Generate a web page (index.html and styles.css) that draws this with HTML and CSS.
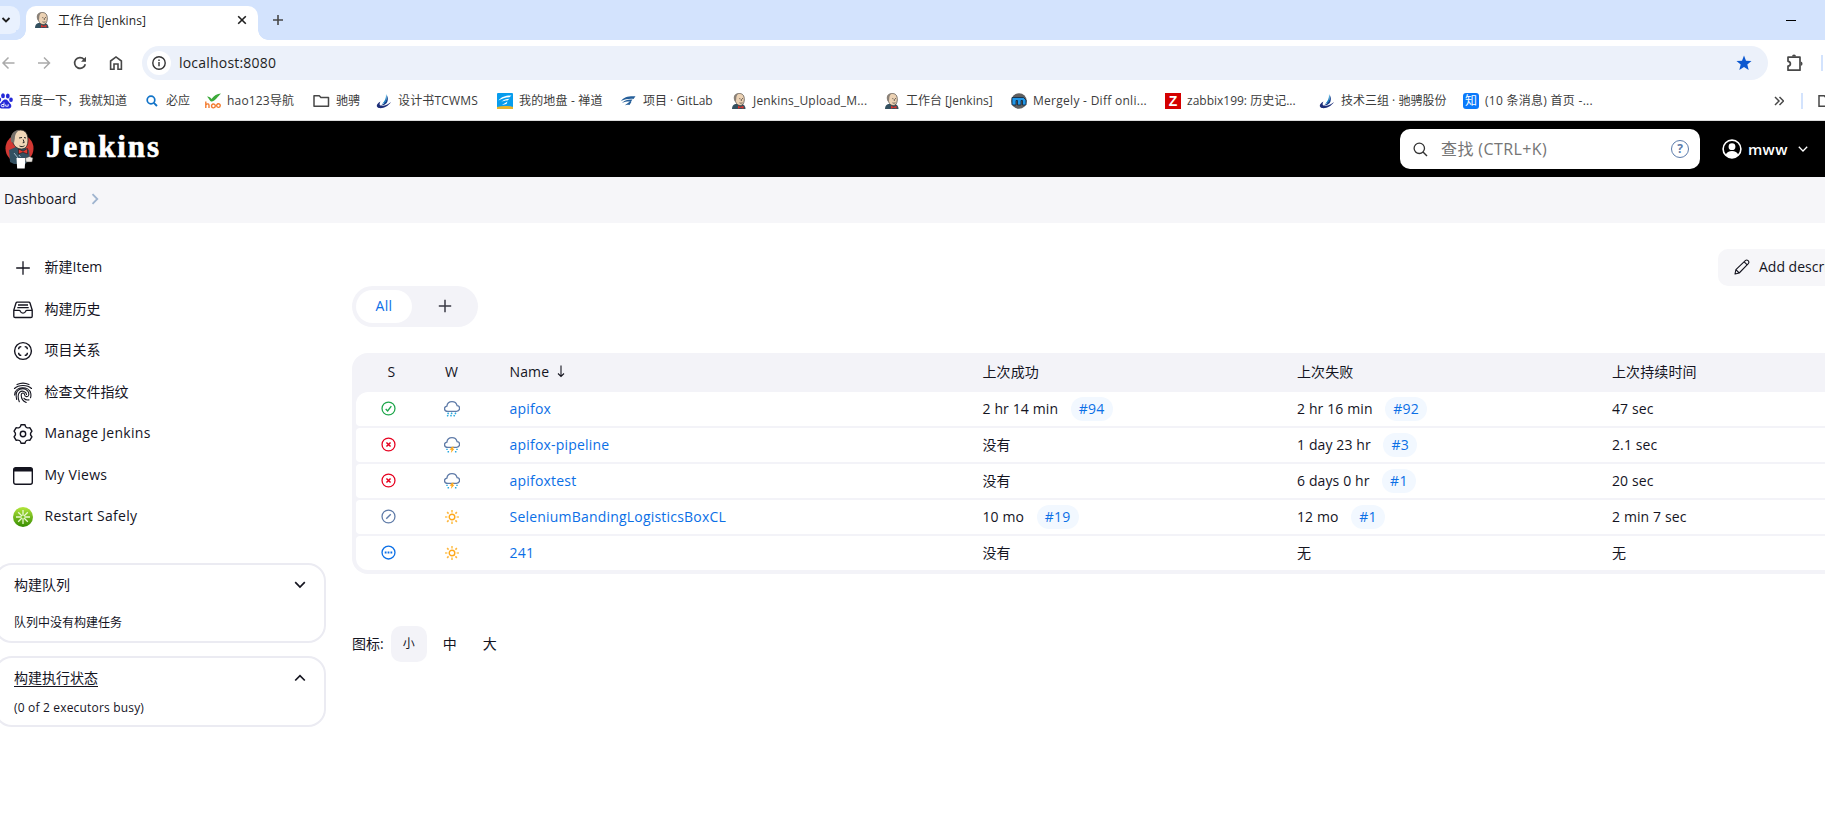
FILE: index.html
```html
<!DOCTYPE html>
<html lang="zh-CN">
<head>
<meta charset="utf-8">
<title>工作台 [Jenkins]</title>
<link rel="stylesheet" href="styles.css">
</head>
<body>
<svg class="defs" width="0" height="0" aria-hidden="true">
  <symbol id="butler" viewBox="0 0 16 16">
    <path d="M1 16c0-3 1.500-4.500 3.500-5h6c2.500.4 4 2 4 5z" fill="#33505f"/>
    <path d="M4 6C3 2 5.500.5 8.500.5S13.500 2.500 13.300 7c-.2 3.500-1.800 5.500-4 5.500C6 12.500 4.500 9.500 4 6z" fill="#ecd2b4" stroke="#4b443e" stroke-width=".7"/>
    <path d="M3.500 8C1.500 3 4 .6 7.500.5 5.500 2 5.300 4 5.200 6.500L4.600 9z" fill="#8a8178"/>
    <path d="M8.300 5.600h1M11 5.600h1M10.300 6v2M8.500 9.800c1 .5 2 .5 3-.1" stroke="#4b443e" stroke-width=".8" fill="none"/>
    <path d="M7 12.800l2.500 1.200 3-1.300v3l-3-1-2.500 1z" fill="#d8342c"/>
  </symbol>
  <symbol id="swoosh" viewBox="0 0 16 16">
    <path d="M10 1c1.500 3 .8 6-.8 8.500L6 11c3-3 4.300-5.500 4-10z" fill="#1385c7"/>
    <path d="M11.200 2.500c1.500 4 .6 8-3.200 9.500l-3 .3c4-1.800 6.200-5.300 6.200-9.800z" fill="#153f8d"/>
    <path d="M4.500 8.500C0 11-.3 14 3 15c4 .8 9-1.500 12-6-3 2.500-6.500 4-9.500 3.600-2.300-.2-2.300-2.100-1-4.100z" fill="#1d2e78"/>
  </symbol>
  <symbol id="sun" viewBox="0 0 16 16">
    <circle cx="8" cy="8" r="2.800" fill="none" stroke="#fea81b" stroke-width="1.400"/>
    <path d="M8 1v2.400M8 12.600V15M1 8h2.400M12.600 8H15" stroke="#fec65a" stroke-width="1.700"/>
    <path d="M3.100 3.100l1.500 1.500M11.400 11.400l1.500 1.500M3.100 12.900l1.500-1.500M11.400 4.600l1.500-1.500" stroke="#feb53c" stroke-width="1.500"/>
  </symbol>
  <symbol id="cloud" viewBox="0 0 16 16">
    <path d="M3.800 10.500C-.4 10.500-.4 6 2.900 5.400 3.300 2.300 5.500.9 8 .9c2.700 0 4.500 1.600 5.100 3.900 3.500.4 3.300 5.700-.6 5.700z" fill="none" stroke="#5f7ba8" stroke-width="1.300"/>
  </symbol>
  <symbol id="storm" viewBox="0 0 16 16">
    <use href="#cloud" y="-.2"/>
    <path d="M8 9.800l-2.400 2.900h2L6.800 16l3.700-4.200H8.700l1.400-2z" fill="#feab1e"/>
    <path d="M3 11.800v1.300M4.300 14v1.400M13 11.800v1.300M11.700 14v1.400" stroke="#2aa9df" stroke-width="1.500"/>
  </symbol>
  <symbol id="failed" viewBox="0 0 16 16">
    <circle cx="8" cy="8" r="6.900" fill="none" stroke="#e6001f" stroke-width="1.350"/>
    <path d="M5.800 5.800l4.400 4.400M10.200 5.800l-4.400 4.400" stroke="#e6001f" stroke-width="1.600"/>
  </symbol>
</svg>

<header class="browser">
  <div class="tabstrip">
    <div class="tabsearch"><svg width="10" height="10" viewBox="0 0 10 10"><path d="M1.500 3L5 6.500 8.500 3" fill="none" stroke="#1f1f1f" stroke-width="1.800"/></svg></div>
    <div class="tab">
      <svg width="16" height="16"><use href="#butler"/></svg>
      <span class="tab-title">工作台 [Jenkins]</span>
      <svg class="tab-close" width="10" height="10" viewBox="0 0 10 10"><path d="M1.200 1.200l7.600 7.600M8.800 1.200L1.200 8.800" stroke="#1f1f1f" stroke-width="1.600"/></svg>
    </div>
    <svg class="newtab" width="12" height="12" viewBox="0 0 12 12"><path d="M6 1v10M1 6h10" stroke="#474747" stroke-width="1.600"/></svg>
    <svg class="minimize" width="10" height="10" viewBox="0 0 10 10"><path d="M0 5.500h10" stroke="#000"/></svg>
  </div>
  <div class="toolbar">
    <svg width="14" height="14" viewBox="0 0 14 14"><path d="M13.500 7H2.500M7.500 1.500L2 7l5.500 5.500" fill="none" stroke="#aaa" stroke-width="1.500"/></svg>
    <svg width="14" height="14" viewBox="0 0 14 14"><path d="M1 7h11.500M7 1.500L12.500 7 7 12.500" fill="none" stroke="#aaa" stroke-width="1.500"/></svg>
    <svg width="14" height="14" viewBox="0 0 14 14"><path d="M12.300 8.200A5.400 5.400 0 1 1 11 3.300l1.300 1.500" fill="none" stroke="#474747" stroke-width="1.700"/><path d="M13 .8v5H8z" fill="#474747"/></svg>
    <svg width="14" height="16" viewBox="0 0 14 16"><path d="M1.600 14.200V6L7 1.900 12.400 6v8.200H9V9H5v5.200z" fill="none" stroke="#474747" stroke-width="1.600"/></svg>
    <div class="omnibox">
      <span class="site-info"><svg width="14" height="14" viewBox="0 0 14 14"><circle cx="7" cy="7" r="6.200" fill="none" stroke="#333" stroke-width="1.400"/><path d="M7 6v4.300M7 3.500v1.500" stroke="#333" stroke-width="1.400"/></svg></span>
      <span class="url">localhost:8080</span>
      <svg class="star" width="16" height="16" viewBox="0 0 16 16"><path d="M8 .6l2 5.100 5.500.4-4.200 3.500L12.700 15 8 12l-4.700 3 1.400-5.400L.5 6.100 6 5.700z" fill="#0b57d0"/></svg>
    </div>
    <svg class="puzzle" width="18" height="18" viewBox="0 0 18 18"><path d="M2 3.200h12v13H2v-4.100c3.200-.2 3.200-4.600 0-4.800z" fill="none" stroke="#474747" stroke-width="1.700" stroke-linejoin="round"/><path d="M6 2.600a2 2 0 0 1 4 0zM14.800 7.500a2.200 2.200 0 0 1 0 4.300z" fill="#474747"/></svg>
    <span class="divider"></span>
  </div>
  <nav class="bookmarks">
    <a><svg width="16" height="16" viewBox="0 0 16 16" fill="#2529d8"><ellipse cx="6" cy="2.800" rx="1.900" ry="2.500"/><ellipse cx="10.800" cy="2.900" rx="1.900" ry="2.500"/><ellipse cx="2.200" cy="6.600" rx="1.900" ry="2.300"/><ellipse cx="14" cy="6.800" rx="1.800" ry="2.300"/><path d="M8.300 6.500c3 0 3 2.500 5 4.300 2 2 .8 4.700-1.500 4.700H4.500C2 15.500 1 12.500 3 10.800c2-1.700 2.500-4.300 5.300-4.300z"/><path d="M7 9.500v4.200H5c-1 0-1-2.200 0-2.200h2M8.700 11.500v1.700h2.500v-2" fill="none" stroke="#fff" stroke-width=".9"/></svg><span>百度一下，我就知道</span></a>
    <a><svg width="16" height="16" viewBox="0 0 16 16"><circle cx="7" cy="7" r="3.800" fill="none" stroke="#1173c8" stroke-width="1.700"/><path d="M9.800 9.800l3.200 3.200" stroke="#1173c8" stroke-width="1.900"/></svg><span>必应</span></a>
    <a><svg width="16" height="16" viewBox="0 0 16 16"><path d="M2 3.500c2.500 0 3.500 1 4.500 2.500C9 2.500 12 .8 16 .5 12.500 3.500 11 7.500 7 8.600 4.500 8.500 4 5 2 3.500z" fill="#3daa3b"/><path d="M.8 8.500v6.500M.8 12c2-2 3.200-1 3.200.5V15M10.300 12.800a1.800 1.800 0 1 0-3.800.3 1.900 1.900 0 0 0 3.800-.3zM15.200 12.800a1.800 1.800 0 1 0-3.500.3 1.800 1.800 0 0 0 3.500-.3z" fill="none" stroke="#f37c30" stroke-width="1.400"/></svg><span class="wide">hao123导航</span></a>
    <a><svg width="17" height="16" viewBox="0 0 17 16"><path d="M1 13.200V2.800h5.300l1.600 1.700h7.600v8.700z" fill="none" stroke="#474747" stroke-width="1.500" stroke-linejoin="round"/></svg><span>驰骋</span></a>
    <a><svg width="16" height="16"><use href="#swoosh"/></svg><span class="wide">设计书TCWMS</span></a>
    <a><svg width="16" height="16" viewBox="0 0 16 16"><rect width="16" height="16" rx="1" fill="#079ced"/><path d="M0 14c5-1.500 11-1.500 16 0v2H0z" fill="#e9b42a"/><path d="M1.500 7.500c3-4 8-5 13-5l-2 1.700C8 4.200 5 5.500 1.500 7.500zM4 9c3-2.500 5-3.300 8.500-3.300L10.500 7.500C8 7.500 6 8 4 9zM5 12l5.500-3.500L9.500 11z" fill="#fff"/></svg><span class="wide">我的地盘 - 禅道</span></a>
    <a><svg width="16" height="16" viewBox="0 0 16 16"><path d="M0 8c3-4 7-5 14.500-4.700L12.500 6C8 5.500 4 6.500 0 8zM1 10c3-3 6-3.700 10.500-3.500L10 8.500C7 8.300 4 8.500 1 10zM3.500 12.500l5.500-4 1.500.3L8.500 12c-2-.7-3.500-.2-5 .5z" fill="#245e99"/></svg><span>项目 · GitLab</span></a>
    <a><svg width="16" height="16"><use href="#butler"/></svg><span class="wide">Jenkins_Upload_M...</span></a>
    <a><svg width="16" height="16"><use href="#butler"/></svg><span>工作台 [Jenkins]</span></a>
    <a><svg width="16" height="16" viewBox="0 0 16 16"><circle cx="8" cy="8" r="7.800" fill="#5e5f60"/><path d="M1 12V4.500h11.500L15 7v5h-3.500V7.500H10V12H6.500V7.500H5V12z" fill="#2297e7" stroke="#10253a" stroke-width=".8"/></svg><span class="wider">Mergely - Diff onli...</span></a>
    <a><span class="favicon zabbix">Z</span><span>zabbix199: 历史记...</span></a>
    <a><svg width="16" height="16"><use href="#swoosh"/></svg><span>技术三组 · 驰骋股份</span></a>
    <a><span class="favicon zhihu">知</span><span class="wider">(10 条消息) 首页 -...</span></a>
    <svg class="more" width="10" height="10" viewBox="0 0 10 10"><path d="M1 1l4 4-4 4M5.500 1l4 4-4 4" fill="none" stroke="#474747" stroke-width="1.500"/></svg>
    <span class="divider"></span>
    <svg class="allbm" width="17" height="16" viewBox="0 0 17 16"><path d="M1 13.200V2.800h5.300l1.600 1.700h7.600v8.700z" fill="none" stroke="#474747" stroke-width="1.500"/></svg>
  </nav>
</header>

<div class="page-header">
  <svg class="logo" width="30" height="40" viewBox="0 0 30 40">
    <circle cx="14.500" cy="19.500" r="14" fill="#d33833"/>
    <path d="M4 21l7-3h8l5 3 1 10-5 4H9l-4-2z" fill="#335061"/>
    <path d="M7 11C5.500 4 10.500 1 15.500 1S23 5 23 11c0 5.500-2 9-6.500 9S8.500 17 7 11z" fill="#f0d6b7" stroke="#222" stroke-width=".8"/>
    <path d="M6.300 13C4 6 9 1 14.500 1 11 3 9.800 6 9.800 9.500L9 14z" fill="#77716b"/>
    <path d="M14 9l3-.5M19 8.500l2 .5M18.200 10.500l1 3-1.500.3M14.500 17c2 1 3.500.8 5-.3" stroke="#222" fill="none"/>
    <path d="M13.500 20l4.500 2.200 4.500-2.700v5.500l-4.500-1.800-4.500 1.800z" fill="#e33b32" stroke="#111" stroke-width=".5"/>
    <path d="M9 24l4 5M14 26l1.500 2" stroke="#9db5c2"/>
    <path d="M11.500 29h9l-.8 10.500h-7.500z" fill="#fff"/>
    <path d="M20.500 29l4-1.500 3.500 1.500-1 4h-6z" fill="#e9e5df" stroke="#333" stroke-width=".5"/>
  </svg>
  <span class="wordmark">Jenkins</span>
  <div class="search">
    <svg width="15" height="15" viewBox="0 0 15 15"><circle cx="6.300" cy="6.300" r="5.200" fill="none" stroke="#333" stroke-width="1.300"/><path d="M10 10l4 4" stroke="#333" stroke-width="1.400"/></svg>
    <span class="placeholder">查找 (CTRL+K)</span>
    <span class="help">?</span>
  </div>
  <svg class="avatar" width="20" height="20" viewBox="0 0 20 20"><circle cx="10" cy="10" r="8.900" fill="none" stroke="#fff" stroke-width="1.600"/><circle cx="10" cy="7.700" r="3.400" fill="#fff"/><path d="M3.700 16c1.300-5.200 11.300-5.200 12.600 0-3.300 3.700-9.300 3.700-12.600 0z" fill="#fff"/></svg>
  <span class="user">mww</span>
  <svg class="user-caret" width="10" height="8" viewBox="0 0 10 8"><path d="M.8 1.800L5 6l4.200-4.200" fill="none" stroke="#fff" stroke-width="1.300"/></svg>
</div>

<div class="breadcrumb"><span>Dashboard</span><svg width="8" height="12" viewBox="0 0 8 12"><path d="M1.500 1.200L6.300 6l-4.800 4.800" fill="none" stroke="#9fb4cf" stroke-width="1.800"/></svg></div>

<div class="page-body">
  <aside class="side">
    <nav class="tasks">
      <a><svg width="20" height="20" viewBox="0 0 20 20"><path d="M10 3.200v13.600M3.200 10h13.600" stroke="#14141f" stroke-width="1.300"/></svg><span>新建Item</span></a>
      <a><svg width="20" height="20" viewBox="0 0 20 20" fill="none" stroke="#14141f" stroke-width="1.350"><path d="M.8 10v6.200c0 .9.500 1.300 1.300 1.300h15.800c.8 0 1.300-.4 1.300-1.300V10L17 3c-.2-.6-.6-.9-1.200-.9H4.200c-.6 0-1 .3-1.200.9zM.8 10.400h5.500c.8 0 1 .4 1.100 1 .7 2.200 4.500 2.200 5.200 0 .1-.6.300-1 1.100-1h5.500M5 5h10M4.300 7.600h11.400"/></svg><span>构建历史</span></a>
      <a><svg width="20" height="20" viewBox="0 0 20 20" fill="none" stroke="#14141f" stroke-width="1.400"><circle cx="10" cy="10" r="8.400"/><path d="M8.300 5.600c-1.900 0-2.700.8-2.700 2.700M11.700 5.600c1.900 0 2.700.8 2.700 2.700M14.400 11.700c0 1.900-.8 2.700-2.700 2.700M8.300 14.400c-1.900 0-2.700-.8-2.700-2.700"/></svg><span>项目关系</span></a>
      <a><svg width="20" height="22" viewBox="0 0 20 22" fill="none" stroke="#14141f" stroke-width="1.100" stroke-linecap="round"><path d="M4 2.600c4-2 8-2 12 0M1.500 6.500c4-4.100 13-4.100 17 0M1.600 13C2 3.700 16 3.500 17.800 11.500c.3 2 .2 3-.3 4.200M3.700 17.500C1.500 8.500 6 6.800 10 6.800c4 0 6.300 3.400 5.700 6.200-.5 2.500-4 2-4.200-.5-.2-2-3.300-2-3.300.5 0 4 2.500 6.500 5 7.500M6.300 19.800c-1.500-4-1.800-7.200.2-9.400C9 8 13.400 9.500 13.500 12.500M11 16.300c1 1.300 3 1.900 5 1.600"/></svg><span>检查文件指纹</span></a>
      <a><svg width="20" height="20" viewBox="0 0 20 20" fill="none" stroke="#14141f" stroke-width="1.400"><path d="M8 .8h4c.5 2.700 2 3.600 4.800 2.900l2.100 3.500c-1.900 1.900-1.900 3.700 0 5.600l-2.100 3.500c-2.800-.7-4.300.2-4.800 2.900H8c-.5-2.700-2-3.600-4.800-2.900l-2.100-3.500c1.900-1.900 1.900-3.700 0-5.600l2.100-3.500C6 4.400 7.500 3.500 8 .8z" stroke-linejoin="round"/><circle cx="10" cy="10" r="2.700"/></svg><span class="latin">Manage Jenkins</span></a>
      <a><svg width="20" height="18" viewBox="0 0 20 18"><rect x=".7" y=".7" width="18.600" height="16.600" rx="2" fill="none" stroke="#14141f" stroke-width="1.400"/><path d="M.7 4.500V2.500C.7 1.500 1.500.7 2.500.7h15c1 0 1.800.8 1.800 1.800v2z" fill="#14141f"/></svg><span class="latin">My Views</span></a>
      <a><svg width="20" height="20" viewBox="0 0 20 20"><defs><linearGradient id="lime" x2="0" y2="1"><stop stop-color="#b3e63c"/><stop offset="1" stop-color="#358c00"/></linearGradient></defs><circle cx="10" cy="10" r="10" fill="url(#lime)"/><path d="M10 3v14M3 10h14M5.200 5.200l9.600 9.600M14.800 5.200l-9.600 9.600" stroke="#e9f8cf" stroke-width="1.300"/><circle cx="10" cy="10" r="1.600" fill="#79c120"/></svg><span class="latin">Restart Safely</span></a>
    </nav>
    <section class="pane queue">
      <div class="pane-head"><span>构建队列</span><svg width="12" height="8" viewBox="0 0 12 8"><path d="M1.200 1.200L6 6l4.800-4.800" fill="none" stroke="#14141f" stroke-width="1.700"/></svg></div>
      <div class="pane-text">队列中没有构建任务</div>
    </section>
    <section class="pane executors">
      <div class="pane-head"><span class="underlined">构建执行状态</span><svg width="12" height="8" viewBox="0 0 12 8"><path d="M1.200 6.500L6 1.700l4.800 4.800" fill="none" stroke="#14141f" stroke-width="1.700"/></svg></div>
      <div class="pane-text busy">(0 of 2 executors busy)</div>
    </section>
  </aside>

  <main class="main">
    <div class="actions"><button class="describe"><svg width="16" height="16" viewBox="0 0 16 16"><path d="M1 15l.9-4.300L11.300 1.600c1.800-1.700 4.700 1 3 3L5.200 14zM10.200 2.800l3 3M1.900 10.700L5.200 14" fill="none" stroke="#14141f" stroke-width="1.100" stroke-linejoin="round"/></svg><span>Add description</span></button></div>
    <div class="views"><span class="view active">All</span><span class="view add"><svg width="14" height="14" viewBox="0 0 14 14"><path d="M7 .8v12.400M.8 7h12.400" stroke="#3a3a44" stroke-width="1.500"/></svg></span></div>

    <div class="jobs">
      <div class="row head"><span class="s">S</span><span class="w">W</span><span class="sort">Name<svg width="8" height="13" viewBox="0 0 8 13"><path d="M4 .5v11M1 8.500l3 3 3-3" fill="none" stroke="#14141f" stroke-width="1.100"/></svg></span><span>上次成功</span><span>上次失败</span><span>上次持续时间</span></div>
      <div class="row first"><svg class="s" width="15" height="15" viewBox="0 0 16 16"><circle cx="8" cy="8" r="6.900" fill="none" stroke="#1ea64b" stroke-width="1.350"/><path d="M5 8.600l2.100 2L11 5.500" fill="none" stroke="#1ea64b" stroke-width="1.450"/></svg><svg class="w" width="16" height="16" viewBox="0 0 16 16"><use href="#cloud" y="-.2"/><path d="M4.500 11.700l-.7 1.400M8 11.700l-.7 1.400M11.800 11.700l-.7 1.400M4 14l-.7 1.400M7.300 14l-.7 1.400M10.500 14l-.7 1.400" stroke="#2aa9df" stroke-width="1.500"/></svg><a class="job">apifox</a><span class="when"><span>2 hr 14 min</span><a class="build">#94</a></span><span class="when"><span>2 hr 16 min</span><a class="build">#92</a></span><span>47 sec</span></div>
      <div class="row"><svg class="s" width="15" height="15"><use href="#failed"/></svg><svg class="w" width="16" height="16"><use href="#storm"/></svg><a class="job">apifox-pipeline</a><span>没有</span><span class="when"><span>1 day 23 hr</span><a class="build">#3</a></span><span>2.1 sec</span></div>
      <div class="row"><svg class="s" width="15" height="15"><use href="#failed"/></svg><svg class="w" width="16" height="16"><use href="#storm"/></svg><a class="job">apifoxtest</a><span>没有</span><span class="when"><span>6 days 0 hr</span><a class="build">#1</a></span><span>20 sec</span></div>
      <div class="row"><svg class="s" width="15" height="15" viewBox="0 0 16 16"><circle cx="8" cy="8" r="6.900" fill="none" stroke="#5f7ba8" stroke-width="1.350"/><path d="M5.600 10.400l4.800-4.800" stroke="#5f7ba8" stroke-width="1.500"/></svg><svg class="w" width="16" height="16"><use href="#sun"/></svg><a class="job">SeleniumBandingLogisticsBoxCL</a><span class="when"><span>10 mo</span><a class="build">#19</a></span><span class="when"><span>12 mo</span><a class="build">#1</a></span><span>2 min 7 sec</span></div>
      <div class="row last"><svg class="s" width="15" height="15" viewBox="0 0 16 16"><circle cx="8" cy="8" r="6.900" fill="none" stroke="#0b6fe6" stroke-width="1.400"/><path d="M4 8h1.900M7.050 8h1.900M10.100 8H12" stroke="#0b6fe6" stroke-width="1.900"/></svg><svg class="w" width="16" height="16"><use href="#sun"/></svg><a class="job">241</a><span>没有</span><span>无</span><span>无</span></div>
    </div>

    <div class="sizes"><span>图标:</span><span class="size current">小</span><span class="size mid">中</span><span class="size big">大</span></div>
  </main>
</div>
</body>
</html>
```
FILE: styles.css
```css
* { box-sizing: border-box; }
svg { display: block; flex: none; }
body {
  margin: 0;
  width: 1825px;
  height: 823px;
  overflow: hidden;
  background: #fff;
  color: #14141f;
  font: 14px/20px "Open Sans", "Noto Sans CJK SC", sans-serif;
  white-space: nowrap;
}
.defs { position: absolute; }

/* browser chrome */
.browser { height: 121px; border-bottom: 1px solid #dcdcdc; color: #3c3c3c; }
.tabstrip { display: flex; align-items: center; height: 40px; background: #d3e3fd; }
.tabsearch {
  display: flex; align-items: center; width: 20px; height: 28px;
  padding-left: 1px; background: #e9f1fe; border-radius: 0 10px 10px 0;
}
.tab {
  position: relative; display: flex; align-items: center; align-self: flex-end;
  width: 232px; height: 34px; margin-left: 6px; padding: 0 11px 6px 8px;
  background: #fff; border-radius: 10px 10px 0 0; color: #1f1f1f;
}
.tab::before, .tab::after {
  content: ""; position: absolute; bottom: 0; width: 10px; height: 10px;
}
.tab::before { left: -10px; background: radial-gradient(circle at 0 0, #d3e3fd 9.500px, #fff 10px); }
.tab::after { right: -10px; background: radial-gradient(circle at 100% 0, #d3e3fd 9.500px, #fff 10px); }
.tab-title { margin: 2px 0 0 8px; font-size: 12px; letter-spacing: .1px; }
.tab-close { margin-left: auto; }
.newtab { margin-left: 14px; }
.minimize { margin-left: auto; margin-right: 29px; }
.toolbar { display: flex; align-items: center; gap: 22px; height: 46px; padding: 0 2px 0 1px; }
.omnibox {
  display: flex; align-items: center; width: 1626px; height: 34px;
  margin-left: -3px; padding: 0 16px 0 5px; background: #ecf1fa; border-radius: 17px;
}
.site-info {
  display: flex; align-items: center; justify-content: center;
  width: 24px; height: 24px; border-radius: 50%; background: #fff;
}
.url { margin-left: 8px; font-size: 14px; color: #1f1f1f; letter-spacing: .2px; }
.star { margin-left: auto; }
.puzzle { margin-left: -4px; }
.divider { width: 2px; height: 16px; background: #d3e3fd; margin-left: -5px; }
.bookmarks {
  display: grid; align-items: center; height: 29px; margin-left: -3px;
  grid-template-columns: 147px 61px 108px 63px 121px 124px 110px 153px 127px 154px 154px 144px 311px 27px 17px 17px;
  font-size: 12px;
}
.bookmarks a { display: flex; align-items: center; gap: 6px; }
.bookmarks .divider { margin: 0; }
.wide { letter-spacing: .18px; }
.wider { letter-spacing: .28px; }
.favicon { width: 16px; height: 16px; color: #fff; line-height: 16px; text-align: center; }
.zabbix { background: #d40000; font: bold 14px/16px "Liberation Sans", sans-serif; }
.zhihu { background: #0a79fb; border-radius: 3px; }

/* page header */
.page-header { display: flex; align-items: center; height: 56px; padding-left: 5px; background: #000; color: #fff; }
.wordmark {
  margin: -4px 0 0 11px; width: 120px; letter-spacing: 1.900px; -webkit-text-stroke: .6px #fff;
  font: bold 31px/40px "Liberation Serif", serif;
}
.search {
  display: flex; align-items: center; width: 300px; height: 40px; margin-left: auto;
  padding: 0 11px 0 13px; background: #fff; border-radius: 10px;
}
.placeholder { margin-left: 13px; font-size: 16px; letter-spacing: .4px; color: #757575; }
.help {
  width: 18px; height: 18px; margin-left: auto; border: 1.500px solid #5c7cab; border-radius: 50%;
  color: #5c7cab; font: bold 12px/15px "Open Sans", sans-serif; text-align: center;
}
.avatar { margin-left: 22px; }
.user { margin-left: 6px; width: 40px; font-weight: 600; font-size: 15px; letter-spacing: .3px; }
.user-caret { margin: 0 17px 0 10px; }
.breadcrumb { display: flex; align-items: center; gap: 15px; height: 46px; padding: 0 0 3px 4px; background: #f6f6f9; }

/* side panel */
.page-body { display: flex; }
.side { width: 352px; padding-top: 24px; }
.tasks a { display: flex; align-items: center; height: 41.500px; padding-left: 13px; }
.tasks a span { margin: -1px 0 0 11.500px; }
.tasks .latin { letter-spacing: .28px; }
.tasks svg { width: 20px; margin-top: 1px; }
.pane { width: 332px; margin-left: -6px; padding: 10px 18px; border: 2px solid #ebebf2; border-radius: 18px; }
.queue { height: 80px; margin-top: 25px; }
.executors { height: 71px; margin-top: 13px; padding-top: 10px; }
.pane-head { display: flex; align-items: center; justify-content: space-between; height: 20px; }
.underlined { border-bottom: 1px solid #14141f; line-height: 17px; }
.pane-text { margin-top: 18px; font-size: 12px; }
.busy { margin-top: 10px; letter-spacing: .18px; }

/* main panel */
.main { flex: 1; min-width: 0; padding-top: 26px; overflow: hidden; }
.actions { display: flex; height: 37px; padding-left: 1366px; }
.describe {
  display: flex; align-items: center; gap: 9px; flex: none; width: 150px; height: 37px; padding: 0 16px 2px;
  border: 0; border-radius: 10px; background: #f6f6f9; color: #14141f; font: inherit;
}
.views { display: flex; width: 126px; height: 41px; padding: 4px; border-radius: 21px; background: #f3f3f8; }
.view { display: flex; align-items: center; justify-content: center; flex: none; width: 56px; height: 33px; border-radius: 17px; }
.active { background: #fff; color: #0b6fe6; padding-bottom: 2px; letter-spacing: .3px; }
.add { width: 66px; height: 32px; }
.jobs {
  display: flex; flex-direction: column; gap: 2px; width: 1500px; margin-top: 26px; padding: 4px;
  background: #f3f3f8; border-radius: 16px;
}
.row {
  display: grid; grid-template-columns: 64px 89px 473px 314.500px 315px 1fr; align-items: center;
  height: 34px; padding: 0 0 1px .5px; background: #fff; border-radius: 4px; letter-spacing: .12px;
}
.head { height: 33px; padding-bottom: 4px; background: none; }
.first { border-top-left-radius: 12px; }
.last { border-bottom-left-radius: 12px; }
.row > .s { margin-left: 24px; }
.head > .s { margin-left: 31px; }
.row > .w { margin-left: 23.500px; }
.head > .w { margin-left: 24.500px; }
.sort { display: flex; align-items: center; gap: 8px; }
.job, .build { color: #0b6fe6; }
.job { letter-spacing: .2px; }
.when { display: flex; align-items: center; gap: 12.500px; }
.build { height: 24px; padding: 0 8px; border-radius: 12px; background: #f2f8ff; line-height: 23px; letter-spacing: .3px; }
.sizes { display: flex; align-items: center; margin-top: 52px; height: 36px; }
.size { display: flex; align-items: center; justify-content: center; width: 36px; height: 36px; }
.current { margin-left: 7px; border-radius: 10px; background: #f3f3f8; font-size: 12px; }
.mid { margin-left: 5px; }
.big { margin-left: 4px; }
```
